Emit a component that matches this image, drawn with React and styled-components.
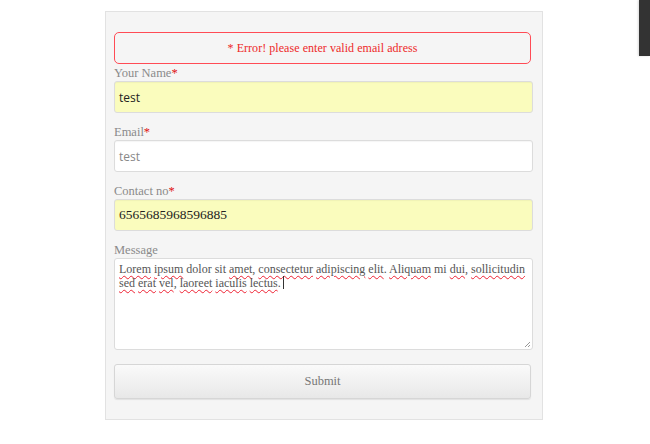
import React from "react";
import styled, { createGlobalStyle } from "styled-components";

const Global = createGlobalStyle`
  html, body { margin: 0; padding: 0; background: #fff; }
  body { font-family: "Liberation Serif", "DejaVu Serif", serif; width: 650px; height: 444px; overflow: hidden; }
`;

const Page = styled.div`
  position: relative;
  width: 650px;
  height: 444px;
  padding: 11px 0 0 105px;
  box-sizing: border-box;
`;

const SideBar = styled.div`
  position: absolute;
  top: 0;
  right: 0;
  width: 11px;
  height: 56px;
  background: #333;
  box-shadow: -1px 0 2px rgba(0,0,0,0.15);
`;

const Panel = styled.form`
  width: 438px;
  height: 409px;
  box-sizing: border-box;
  background: #f5f5f5;
  border: 1px solid #e2e2e2;
  padding: 20px 9px 0 8px;
  display: flex;
  flex-direction: column;
`;

const ErrorBox = styled.div`
  width: 417px;
  height: 32px;
  box-sizing: border-box;
  border: 1px solid #ff4b55;
  border-radius: 5px;
  display: flex;
  align-items: center;
  justify-content: center;
  color: #ee2a2a;
  font-size: 12px;
  letter-spacing: 0.05px;
`;

const Group = styled.div`
  display: flex;
  flex-direction: column;
  margin-top: ${(p) => p.$top}px;
`;

const Label = styled.label`
  height: 16px;
  line-height: 16px;
  font-size: 12.5px;
  color: #8a8a8a;
`;

const Star = styled.span`
  color: #e01010;
`;

const Input = styled.div`
  width: 419px;
  height: 32px;
  box-sizing: border-box;
  border: 1px solid #dcdcdc;
  border-radius: 3px;
  background: ${(p) => (p.$filled ? "#fafcbd" : "#fff")};
  box-shadow: inset 0 1px 1px rgba(0,0,0,0.04);
  display: flex;
  align-items: center;
  padding: 0 4px;
  font-family: ${(p) => (p.$serif ? '"Liberation Serif", serif' : '"Open Sans", "Liberation Sans", sans-serif')};
  font-size: ${(p) => (p.$serif ? "13.5px" : "12px")};
  color: ${(p) => (p.$muted ? "#888" : "#222")};
`;

const TextArea = styled.div`
  position: relative;
  width: 419px;
  height: 92px;
  box-sizing: border-box;
  border: 1px solid #dcdcdc;
  border-radius: 3px;
  background: #fff;
  padding: 3px 4px;
  font-size: 12px;
  line-height: 14px;
  color: #555;
`;

const Miss = styled.span`
  text-decoration: underline wavy #e23;
  text-decoration-thickness: 1px;
  text-underline-offset: 2px;
`;

const Caret = styled.span`
  display: inline-block;
  width: 1px;
  height: 13px;
  background: #333;
  vertical-align: -2px;
  margin-left: 2px;
`;

const Grip = styled.svg`
  position: absolute;
  right: 1px;
  bottom: 1px;
`;

const Button = styled.button`
  margin-top: 14px;
  width: 417px;
  height: 35px;
  border: 1px solid #d6d6d6;
  border-radius: 3px;
  background: linear-gradient(#fafafa, #e8e8e8);
  box-shadow: 0 1px 1px rgba(0,0,0,0.08);
  font-family: "Liberation Serif", serif;
  font-size: 12.5px;
  color: #777;
  padding: 0;
`;

const words = "Lorem ipsum dolor sit amet, consectetur adipiscing elit. Aliquam mi dui, sollicitudin sed erat vel, laoreet iaculis lectus.";
const missed = new Set(["Lorem", "ipsum", "amet", "consectetur", "adipiscing", "elit", "Aliquam", "dui", "sollicitudin", "sed", "erat", "vel", "laoreet", "iaculis", "lectus"]);

function Message() {
  const parts = words.split(" ");
  return parts.map((w, i) => {
    const m = w.match(/^([A-Za-z]+)(.*)$/);
    const core = m ? m[1] : w;
    const rest = m ? m[2] : "";
    return (
      <React.Fragment key={i}>
        {missed.has(core) ? <Miss>{core}</Miss> : core}
        {rest}
        {i < parts.length - 1 ? " " : ""}
      </React.Fragment>
    );
  });
}

export default function App() {
  return (
    <>
      <Global />
      <Page>
        <Panel onSubmit={(e) => e.preventDefault()}>
          <ErrorBox>* Error! please enter valid email adress</ErrorBox>
          <Group $top={1}>
            <Label>Your Name<Star>*</Star></Label>
            <Input $filled>test</Input>
          </Group>
          <Group $top={11}>
            <Label>Email<Star>*</Star></Label>
            <Input $muted>test</Input>
          </Group>
          <Group $top={11}>
            <Label>Contact no<Star>*</Star></Label>
            <Input $filled $serif>6565685968596885</Input>
          </Group>
          <Group $top={11}>
            <Label>Message</Label>
            <TextArea>
              <Message /><Caret />
              <Grip width="8" height="8" viewBox="0 0 8 8">
                <path d="M7 2 L2 7 M7 5 L5 7" stroke="#999" strokeWidth="1" fill="none" />
              </Grip>
            </TextArea>
          </Group>
          <Button type="submit">Submit</Button>
        </Panel>
        <SideBar />
      </Page>
    </>
  );
}
